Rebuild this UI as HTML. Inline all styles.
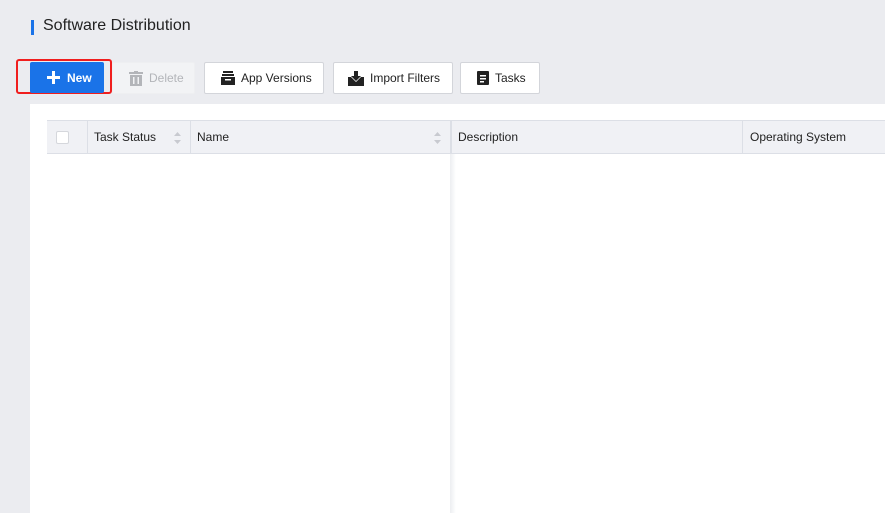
<!DOCTYPE html>
<html><head><style>
*{margin:0;padding:0;box-sizing:border-box}
body{width:885px;height:513px;background:#ebecf0;font-family:"Liberation Sans",Arial,sans-serif;position:relative;overflow:hidden;color:#222}
.abs{position:absolute}
.btn{position:absolute;top:62px;height:32px;background:#fff;border:1px solid #d3d5da;border-radius:2px;font-size:12px;display:flex;align-items:center;color:#222}
.btn svg{margin-right:6px}
.th{position:absolute;top:0;height:33px;line-height:33px;font-size:12px;color:#222}
.sort{position:absolute;top:11px;width:7px}
</style></head><body>
<div class="abs" style="left:31px;top:20px;width:3px;height:15px;background:#1a73e8"></div>
<div class="abs" style="left:43px;top:17px;font-size:16px;color:#222">Software Distribution</div>

<div class="abs" style="left:16px;top:59px;width:96px;height:35px;border:2px solid #f01e1e;border-radius:3px"></div>
<div class="abs" style="left:30px;top:62px;width:74px;height:31px;background:#1a73e8;border-radius:2px;color:#fff;font-size:12px;font-weight:bold;display:flex;align-items:center;padding-left:17px">
<svg width="13" height="13" viewBox="0 0 13 13" style="margin-right:7px"><rect x="5" y="0" width="3" height="13" fill="#fff"/><rect x="0" y="5" width="13" height="3" fill="#fff"/></svg>New</div>
<div class="btn" style="left:112px;width:83px;background:#f2f3f5;border-color:#eeeff1;color:#b3b5b9;padding-left:16px">
<svg width="14" height="15" viewBox="0 0 14 15"><rect x="0" y="1" width="14" height="2" fill="#b3b5b9"/><rect x="5" y="0" width="4" height="2" fill="#b3b5b9"/><path d="M1 4h12v11H1z" fill="#b3b5b9"/><rect x="4" y="6" width="1.5" height="7" fill="#f2f3f5"/><rect x="8.5" y="6" width="1.5" height="7" fill="#f2f3f5"/></svg>Delete</div>
<div class="btn" style="left:204px;width:120px;padding-left:16px">
<svg width="14" height="14" viewBox="0 0 14 14"><rect x="2" y="0" width="10" height="2" fill="#222"/><rect x="1" y="3" width="12" height="2" fill="#222"/><path d="M0 6h14v8H0z" fill="#222"/><rect x="4" y="8" width="6" height="1.5" fill="#fff"/></svg>App Versions</div>
<div class="btn" style="left:333px;width:120px;padding-left:14px">
<svg width="16" height="15" viewBox="0 0 16 15"><path d="M0 6h3l5 5 5-5h3v9H0z" fill="#222"/><path d="M6 0h4v5h3l-5 5-5-5h3z" fill="#222"/></svg>Import Filters</div>
<div class="btn" style="left:460px;width:80px;padding-left:16px">
<svg width="12" height="14" viewBox="0 0 12 14"><rect width="12" height="14" rx="1" fill="#222"/><rect x="3" y="4" width="6" height="1.5" fill="#fff"/><rect x="3" y="7" width="6" height="1.5" fill="#fff"/><rect x="3" y="10" width="4" height="1.5" fill="#fff"/></svg>Tasks</div>

<div class="abs" style="left:30px;top:104px;width:855px;height:409px;background:#fff"></div>
<div class="abs" style="left:47px;top:120px;width:838px;height:34px;background:#f0f1f5;border-top:1px solid #dcdfe6;border-bottom:1px solid #dcdfe6">
 <div class="abs" style="left:9px;top:10px;width:13px;height:13px;border:1px solid #d5d7dc;background:#fff;border-radius:2px"></div>
 <div class="abs" style="left:40px;top:0;width:1px;height:33px;background:#dcdfe6"></div>
 <div class="th" style="left:47px">Task Status</div>
 <svg class="sort" style="left:127px" width="7" height="12" viewBox="0 0 7 12"><path d="M0 4l3.5-4 3.5 4z" fill="#c8cad0"/><path d="M0 8l3.5 4 3.5-4z" fill="#c8cad0"/></svg>
 <div class="abs" style="left:143px;top:0;width:1px;height:33px;background:#dcdfe6"></div>
 <div class="th" style="left:150px">Name</div>
 <svg class="sort" style="left:387px" width="7" height="12" viewBox="0 0 7 12"><path d="M0 4l3.5-4 3.5 4z" fill="#c8cad0"/><path d="M0 8l3.5 4 3.5-4z" fill="#c8cad0"/></svg>
 <div class="abs" style="left:403px;top:0;width:2px;height:33px;background:#dcdfe6"></div>
 <div class="th" style="left:411px">Description</div>
 <div class="abs" style="left:695px;top:0;width:1px;height:33px;background:#dcdfe6"></div>
 <div class="th" style="left:703px">Operating System</div>
</div>
<div class="abs" style="left:450px;top:154px;width:6px;height:359px;background:linear-gradient(to right,#eceef1,#fff)"></div>
</body></html>
